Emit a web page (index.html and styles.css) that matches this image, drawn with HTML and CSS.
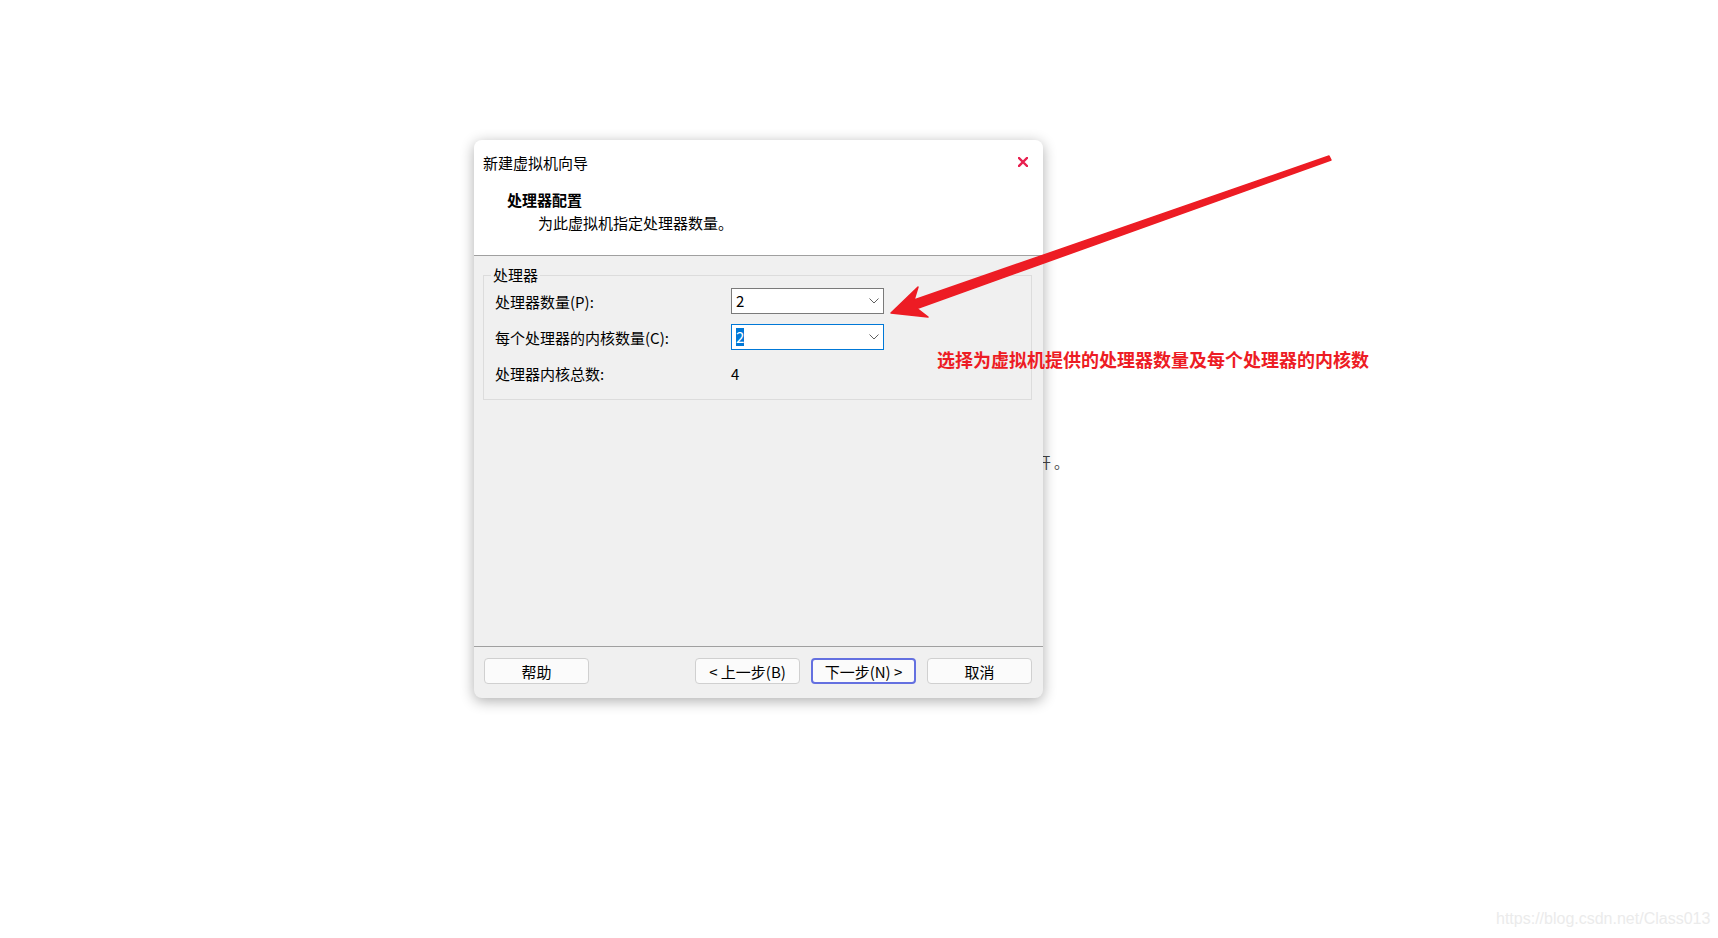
FILE: index.html
```
<!DOCTYPE html>
<html>
<head>
<meta http-equiv="Content-Type" content="text/html; charset=utf-8"/>
<title>新建虚拟机向导</title>
<link rel="stylesheet" href="styles.css">
</head>
<body>
<div class="desktop">

<p class="behind">开。</p>

<div class="dialog">
  <div class="dlg-head">
    <div class="titlebar">
      <span class="title">新建虚拟机向导</span>
      <svg class="close" width="10" height="10" viewBox="0 0 10 10">
        <path d="M1 1 L9 9 M9 1 L1 9" stroke="#e8204f" stroke-width="2.4" stroke-linecap="square"/>
      </svg>
    </div>
    <div class="heading">处理器配置</div>
    <div class="subtext">为此虚拟机指定处理器数量。</div>
  </div>

  <div class="dlg-body">
    <fieldset class="group">
      <legend>处理器</legend>
      <div class="row">
        <label>处理器数量(P):</label>
        <div class="combo">
          <span class="val">2</span>
          <svg class="chev" width="10" height="6" viewBox="0 0 10 6"><path d="M0.5 0.5 L5 5 L9.5 0.5" fill="none" stroke="#606060" stroke-width="1"/></svg>
        </div>
      </div>
      <div class="row">
        <label>每个处理器的内核数量(C):</label>
        <div class="combo focus">
          <span class="val sel">2</span>
          <svg class="chev" width="10" height="6" viewBox="0 0 10 6"><path d="M0.5 0.5 L5 5 L9.5 0.5" fill="none" stroke="#606060" stroke-width="1"/></svg>
        </div>
      </div>
      <div class="row">
        <label>处理器内核总数:</label>
        <span class="total">4</span>
      </div>
    </fieldset>
  </div>

  <div class="dlg-foot">
    <button class="btn">帮助</button>
    <div class="spacer"></div>
    <button class="btn">&lt; 上一步(B)</button>
    <button class="btn default">下一步(N) &gt;</button>
    <button class="btn">取消</button>
  </div>
</div>

<svg class="arrow" width="1718" height="938" viewBox="0 0 1718 938">
  <polygon points="891,313 918,287 914,300 1329,156 1331,160 917,308.5 928,317" fill="#ed1c24" stroke="#ed1c24" stroke-width="1.5" stroke-linejoin="round"/>
</svg>

<p class="note">选择为虚拟机提供的处理器数量及每个处理器的内核数</p>

<p class="watermark">https://blog.csdn.net/Class013</p>

</div>
</body>
</html>
```

FILE: styles.css
```
body {
   margin: 0;
   background-color: white;
   font-family: "Microsoft YaHei", "Noto Sans CJK SC", sans-serif;
   color: #000;
}

.desktop {
   position: relative;
   width: 1718px;
   height: 938px;
   overflow: hidden;
}

/* text of the page under the dialog */
.behind {
   position: absolute;
   left: 1036px;
   top: 452px;
   margin: 0;
   font-size: 15px;
   line-height: 20px;
   color: #444;
   letter-spacing: 3px;
}

.dialog {
   position: absolute;
   left: 474px;
   top: 140px;
   width: 569px;
   height: 558px;
   display: flex;
   flex-direction: column;
   background-color: #f0f0f0;
   border-radius: 8px;
   box-shadow: 0 3px 14px rgba(0, 0, 0, 0.32);
   overflow: hidden;
}

.dlg-head {
   height: 116px;
   box-sizing: border-box;
   background-color: white;
   border-bottom: 1px solid #a0a0a0;
   padding: 11px 0 0 9px;
}

.titlebar {
   display: flex;
   align-items: center;
   justify-content: space-between;
   padding-right: 15px;
   height: 22px;
   font-size: 15px;
}

.heading {
   margin: 17px 0 0 24px;
   font-size: 15px;
   font-weight: bold;
   line-height: 20px;
}

.subtext {
   margin: 3px 0 0 55px;
   font-size: 15px;
   line-height: 20px;
}

.dlg-body {
   flex: 1;
   padding: 9px 11px 0 9px;
}

.group {
   margin: 0;
   padding: 3px 11px 13px 11px;
   border: 1px solid #dcdcdc;
   display: flex;
   flex-direction: column;
   gap: 10px;
}

.group legend {
   padding: 0 2px;
   margin-left: -4px;
   font-size: 15px;
   line-height: 20px;
}

.row {
   display: flex;
   align-items: center;
   height: 26px;
   font-size: 15px;
}

.row label {
   width: 236px;
}

.combo {
   width: 153px;
   height: 26px;
   box-sizing: border-box;
   border: 1px solid #7a7a7a;
   background-color: white;
   display: flex;
   align-items: center;
   justify-content: space-between;
   padding: 0 4px 0 4px;
}

.combo.focus {
   border-color: #0078d7;
}

.val {
   line-height: 18px;
}

.val.sel {
   background-color: #0078d7;
   color: white;
}

.dlg-foot {
   display: flex;
   border-top: 1px solid #a0a0a0;
   padding: 11px 11px 14px 10px;
   gap: 11px;
}

.spacer {
   flex: 1;
}

.btn {
   width: 105px;
   height: 26px;
   padding: 0;
   font-family: "Microsoft YaHei", "Noto Sans CJK SC", sans-serif;
   font-size: 15px;
   color: #000;
   background-color: #fbfbfb;
   border: 1px solid #d0d0d0;
   border-radius: 4px;
}

.btn.default {
   border: 2px solid #6470e0;
}

.arrow {
   position: absolute;
   left: 0;
   top: 0;
}

.note {
   position: absolute;
   left: 937px;
   top: 347px;
   margin: 0;
   font-size: 18px;
   line-height: 24px;
   font-weight: bold;
   color: #ed1c24;
}

.watermark {
   position: absolute;
   left: 1496px;
   top: 909px;
   margin: 0;
   font-family: "Liberation Sans", Arial, sans-serif;
   font-size: 16px;
   line-height: 20px;
   color: #ebebeb;
}
```
